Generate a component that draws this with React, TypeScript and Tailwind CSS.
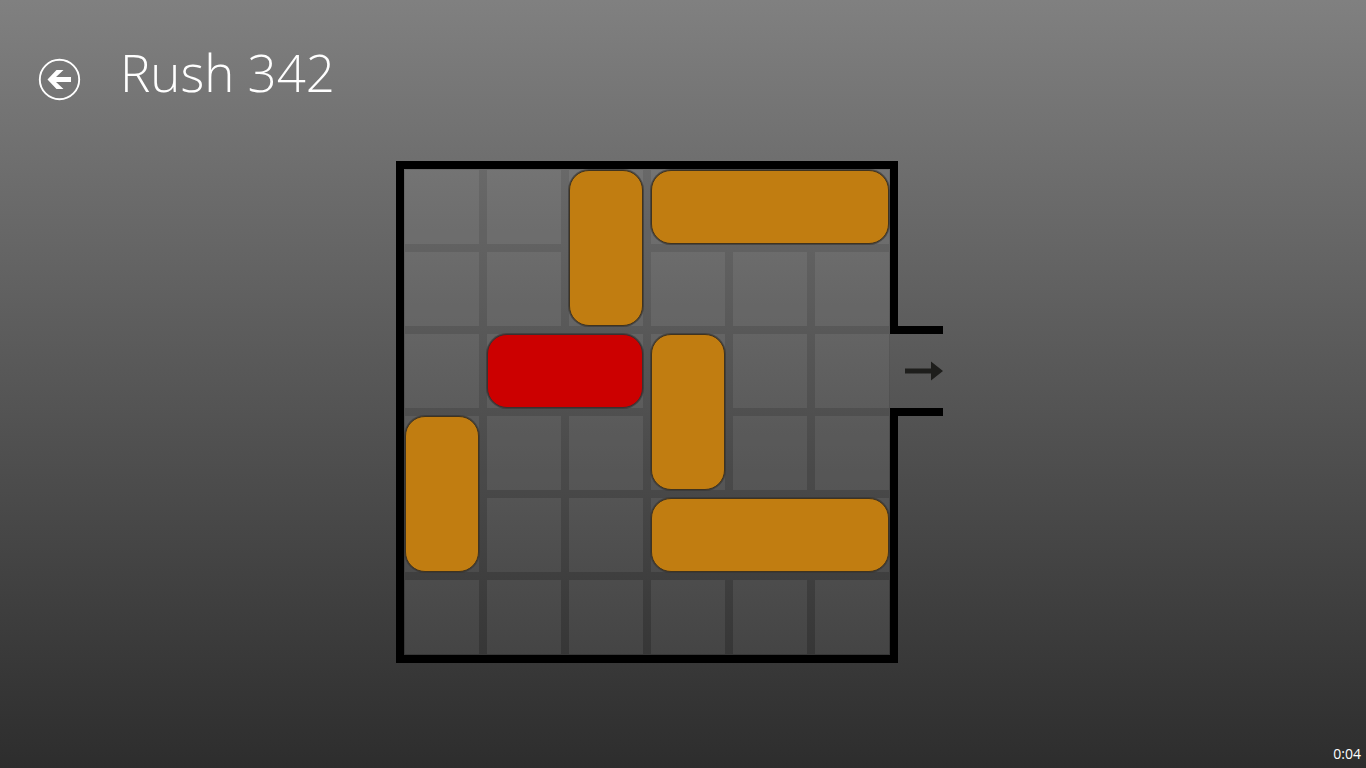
const CELLS = Array.from({ length: 36 }, (_, i) => ({
  id: i,
  place: `${Math.floor(i / 6) + 1} / ${(i % 6) + 1}`,
}));

type Block = { label: string; place: string; color: string };

const ORANGE = 'bg-[#c17d11] border-[#40331f]';
const RED = 'bg-[#cc0000] border-[#3d2f2f]';

const BLOCKS: Block[] = [
  { label: 'Vertical block, column 3', place: 'col-start-3 row-start-1 row-span-2', color: ORANGE },
  { label: 'Horizontal block, row 1', place: 'col-start-4 col-span-3 row-start-1', color: ORANGE },
  { label: 'Red block', place: 'col-start-2 col-span-2 row-start-3', color: RED },
  { label: 'Vertical block, column 4', place: 'col-start-4 row-start-3 row-span-2', color: ORANGE },
  { label: 'Vertical block, column 1', place: 'col-start-1 row-start-4 row-span-2', color: ORANGE },
  { label: 'Horizontal block, row 5', place: 'col-start-4 col-span-3 row-start-5', color: ORANGE },
];

function Header() {
  return (
    <header className="flex items-start px-[38px] pt-9">
      <button type="button" aria-label="Back" className="mt-[22px] shrink-0">
        <svg width="43" height="43" viewBox="0 0 43 43" className="block">
          <circle cx="21.5" cy="21.5" r="19.7" fill="none" stroke="#fff" strokeWidth="1.9" />
          <path d="M9.5 21.5 L18.5 12 H25.5 L18 19 H33 V24 H18 L25.5 31 H18.5 Z" fill="#fff" />
        </svg>
      </button>
      <h1 className="ml-[39px] text-[51px] leading-[72px] font-light">Rush 342</h1>
    </header>
  );
}

function Board() {
  return (
    <main className="mt-[53px] flex justify-center">
      <div className="flex pr-7">
        <div className="border-8 border-r-0 border-black bg-black/4 p-px">
          <div className="grid grid-cols-[repeat(6,74px)] grid-rows-[repeat(6,74px)] gap-2">
            {CELLS.map((c) => (
              <div key={c.id} className="bg-white/7" style={{ gridArea: c.place }} />
            ))}
            {BLOCKS.map((b) => (
              <button
                key={b.label}
                type="button"
                aria-label={b.label}
                className={`rounded-[20px] border shadow-[0_0_0_1px_#33333399] ${b.place} ${b.color}`}
              />
            ))}
          </div>
        </div>
        <div className="flex w-[53px] flex-col">
          <div className="h-[173px] border-b-8 border-l-8 border-black" />
          <div className="flex h-[74px] items-center justify-end">
            <svg width="38" height="20" viewBox="0 0 38 20" className="block" aria-label="Exit">
              <path d="M0 7.6 H26 V0.5 L38 10 L26 19.5 V12.4 H0 Z" fill="#1e1e1c" />
            </svg>
          </div>
          <div className="flex-1 border-t-8 border-l-8 border-black" />
        </div>
      </div>
    </main>
  );
}

export default function App() {
  return (
    <div className="flex min-h-screen flex-col bg-linear-to-b/srgb from-[#808080] to-[#2d2d2d] font-['Open_Sans','Noto_Sans',sans-serif] text-white">
      <Header />
      <Board />
      <footer className="mt-auto flex justify-end px-[5px] pb-1">
        <time className="text-sm leading-5">0:04</time>
      </footer>
    </div>
  );
}
